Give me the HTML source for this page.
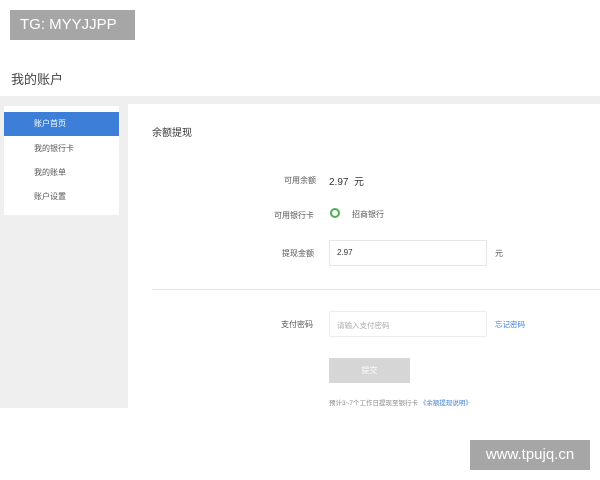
<!DOCTYPE html>
<html><head><meta charset="utf-8"><style>
*{margin:0;padding:0;box-sizing:border-box}
body{width:600px;height:480px;background:#fff;position:relative;overflow:hidden;font-family:"Liberation Sans","Noto Sans CJK SC",sans-serif;color:#333}
.a{position:absolute}
.t{font-size:8px;color:#555}
</style></head><body>
<div class="a" style="left:10px;top:10px;width:125px;height:30px;background:#a6a6a6;color:#fff;font-size:15px;line-height:30px;padding-left:10px">TG: MYYJJPP</div>
<div class="a" style="left:11px;top:69px;font-size:13px;color:#444">我的账户</div>
<div class="a" style="left:0;top:96px;width:600px;height:312px;background:#efefef"></div>
<div class="a" style="left:128px;top:104px;width:472px;height:304px;background:#fff"></div>
<div class="a" style="left:4px;top:106px;width:115px;height:109px;background:#fff"></div>
<div class="a" style="left:4px;top:112px;width:115px;height:24px;background:#3d7fd8"></div>
<div class="a t" style="left:34px;top:118px;color:#fff">账户首页</div>
<div class="a t" style="left:34px;top:143px">我的银行卡</div>
<div class="a t" style="left:34px;top:167px">我的账单</div>
<div class="a t" style="left:34px;top:191px">账户设置</div>
<div class="a" style="left:152px;top:124px;font-size:10px;color:#333">余额提现</div>
<div class="a t" style="left:284px;top:175px">可用余额</div>
<div class="a" style="left:329px;top:173px;font-size:10px;color:#333">2.97 &nbsp;元</div>
<div class="a t" style="left:274px;top:210px">可用银行卡</div>
<div class="a" style="left:330px;top:208px;width:10px;height:10px;border:2.5px solid #4caf50;border-radius:50%"></div>
<div class="a t" style="left:352px;top:209px">招商银行</div>
<div class="a t" style="left:282px;top:248px">提现金额</div>
<div class="a" style="left:329px;top:240px;width:158px;height:26px;border:1px solid #e6e6e6"></div>
<div class="a" style="left:337px;top:248px;font-size:8px;color:#333">2.97</div>
<div class="a t" style="left:495px;top:248px">元</div>
<div class="a" style="left:152px;top:289px;width:448px;height:1px;background:#e6e6e6"></div>
<div class="a t" style="left:281px;top:319px">支付密码</div>
<div class="a" style="left:329px;top:311px;width:158px;height:26px;border:1px solid #ececec"></div>
<div class="a" style="left:337px;top:320px;font-size:7.5px;color:#aaa">请输入支付密码</div>
<div class="a" style="left:495px;top:319px;font-size:7.5px;color:#3d7fd8">忘记密码</div>
<div class="a" style="left:329px;top:358px;width:81px;height:25px;background:#d6d6d6;color:#fff;font-size:8px;text-align:center;line-height:25px">提交</div>
<div class="a" style="left:329px;top:397px;font-size:6.5px;color:#888">预计3~7个工作日提现至银行卡 <span style="color:#3d7fd8">《余额提现说明》</span></div>
<div class="a" style="left:470px;top:440px;width:120px;height:30px;background:#a6a6a6;color:#fff;font-size:15px;line-height:30px;text-align:center">www.tpujq.cn</div>
</body></html>
